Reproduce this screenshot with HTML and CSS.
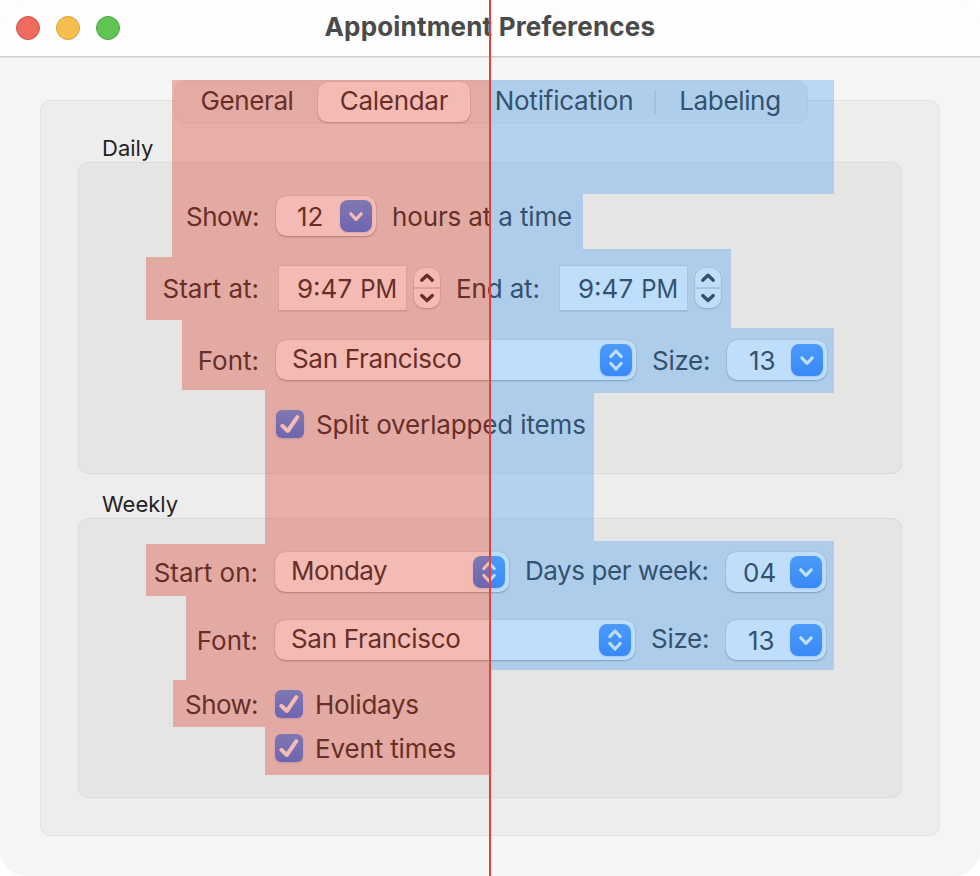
FILE: index.html
```html
<!DOCTYPE html>
<html lang="en">
<head>
<meta charset="utf-8">
<title>Appointment Preferences</title>
<link rel="stylesheet" href="styles.css">
</head>
<body>
<svg width="0" height="0" class="defs">
  <defs>
    <g id="down"><path d="M10.800 13.800 16 19.300l5.200-5.500"/></g>
    <g id="updown"><path d="M10.800 12.500 16 7l5.200 5.500M10.800 19.500 16 25l5.200-5.500"/></g>
    <g id="check"><path d="M6.300 15.800 11.800 21 21.300 7.200"/></g>
    <g id="step"><path d="M7.700 12.200 13 7.200l5.300 5M7.700 27.600l5.300 5 5.300-5"/></g>
  </defs>
</svg>
<main class="window">
  <header class="titlebar">
    <div class="lights"><i class="light red"></i><i class="light yellow"></i><i class="light green"></i></div>
    <h1 class="title">Appointment Preferences</h1>
  </header>
  <section class="pane">
    <nav class="tabs">
      <span class="tab general">General</span>
      <span class="tab calendar">Calendar</span>
      <span class="tab notification">Notification</span>
      <span class="tab labeling">Labeling</span>
    </nav>
    <h2 class="heading">Daily</h2>
    <div class="group daily">
      <div class="row">
        <span class="label show">Show:</span>
        <span class="combo"><span class="value">12</span><svg class="knob"><use href="#down"/></svg></span>
        <span class="text hours">hours at a time</span>
      </div>
      <div class="row times">
        <span class="label">Start at:</span>
        <span class="field"><span>9:47</span> <span class="pm">PM</span></span>
        <svg class="stepper"><use href="#step"/></svg>
        <span class="text endat">End at:</span>
        <span class="field"><span>9:47</span> <span class="pm">PM</span></span>
        <svg class="stepper"><use href="#step"/></svg>
      </div>
      <div class="row">
        <span class="label">Font:</span>
        <span class="select"><span class="choice">San Francisco</span><svg class="knob"><use href="#updown"/></svg></span>
        <span class="text size">Size:</span>
        <span class="combo"><span class="value thirteen">13</span><svg class="knob"><use href="#down"/></svg></span>
      </div>
      <div class="row split">
        <span class="label"></span>
        <svg class="checkbox"><use href="#check"/></svg>
        <span class="text">Split overlapped items</span>
      </div>
    </div>
    <h2 class="heading second">Weekly</h2>
    <div class="group weekly">
      <div class="row">
        <span class="label">Start on:</span>
        <span class="select monday"><span class="choice">Monday</span><svg class="knob"><use href="#updown"/></svg></span>
        <span class="text days raised">Days per week:</span>
        <span class="combo"><span class="value four">04</span><svg class="knob"><use href="#down"/></svg></span>
      </div>
      <div class="row">
        <span class="label">Font:</span>
        <span class="select"><span class="choice">San Francisco</span><svg class="knob"><use href="#updown"/></svg></span>
        <span class="text size raised">Size:</span>
        <span class="combo"><span class="value thirteen">13</span><svg class="knob"><use href="#down"/></svg></span>
      </div>
      <div class="row">
        <span class="label show">Show:</span>
        <svg class="checkbox"><use href="#check"/></svg>
        <span class="text holidays">Holidays</span>
      </div>
      <div class="row last">
        <span class="label"></span>
        <svg class="checkbox"><use href="#check"/></svg>
        <span class="text">Event times</span>
      </div>
    </div>
  </section>
  <div class="region left"></div>
  <div class="region right"></div>
  <div class="axis"></div>
</main>
</body>
</html>
```
FILE: styles.css
```css
* { box-sizing: border-box; }
body { margin: 0; background: #fff; font: 26px/32px Inter, "Liberation Sans", sans-serif; color: #242424; }
h1, h2 { margin: 0; }
.defs { position: absolute; }
.window { position: relative; width: 980px; height: 876px; overflow: hidden; border-radius: 20px 20px 26px 26px; background: #f5f5f5; }
.titlebar { display: flex; align-items: center; height: 58px; padding: 0 16px 2px; background: #fdfdfd; border-bottom: 1px solid #e6e6e6; box-shadow: inset 0 -1px #cdcdcd; }
.lights { display: flex; gap: 16px; width: 308.5px; }
.light { width: 24px; height: 24px; border-radius: 50%; border: 1px solid; }
.red { background: #ed6b5f; border-color: #d65349; }
.yellow { background: #f5bf4f; border-color: #d9a03c; }
.green { background: #61c555; border-color: #4aa73d; }
.title { font-size: 26px; line-height: 32px; font-weight: 700; letter-spacing: .18px; padding-bottom: 2px; color: #4a4a4a; white-space: nowrap; }

.pane { width: 900px; height: 736px; margin: 42px 40px 0; padding: 0 37px; border: 1px solid #e2e2e2; border-radius: 10px; background: #ededed; }
.tabs { display: flex; align-items: center; width: 634px; height: 44px; margin: -21px 0 0 96px; padding: 0; border: 1px solid #dfdfdf; border-radius: 11px; background: #e7e7e7; }
.tab { text-align: center; line-height: 38px; height: 40px; white-space: nowrap; }
.general { width: 143px; letter-spacing: -.4px; padding-left: 1px; }
.calendar { width: 152px; letter-spacing: -.3px; border-radius: 9px; background: #fff; box-shadow: 0 0 1px rgba(0,0,0,.3), 0 1px 2px rgba(0,0,0,.25); }
.notification { width: 186px; letter-spacing: -.22px; padding-left: 2px; }
.labeling { width: 150px; letter-spacing: -.35px; padding-right: 2px; position: relative; }
.labeling::before { content: ""; position: absolute; left: -2px; top: 8px; width: 2px; height: 24px; background: #d2d2d2; }
.heading { font-size: 22px; line-height: 28px; font-weight: 400; height: 28px; margin: 10px 0 0 24px; }
.heading.second { margin-top: 16px; }
.group { border: 1px solid #dbdbdb; border-radius: 10px; background: #e5e5e5; }
.daily { height: 312px; padding-top: 33px; }
.weekly { height: 280px; padding-top: 33px; }
.row { display: flex; align-items: center; height: 40px; margin-bottom: 32px; white-space: nowrap; }
.row.split { margin-top: -8px; }
.weekly .row { margin-bottom: 28px; }
.weekly .row:nth-child(3) { margin-bottom: 4px; margin-top: -4px; }
.label { width: 180px; margin-right: 17px; padding-top: 2px; text-align: right; }
.weekly .label { width: 179px; }
.show { letter-spacing: -.6px; }
.text { margin-left: 16px; padding-top: 2px; letter-spacing: -.14px; }
.text.raised { padding: 0 0 2px; }
.checkbox + .text { margin-left: 12px; }
.combo, .select { display: flex; justify-content: space-between; align-items: center; height: 40px; padding-right: 4px; border-radius: 10px; background: #fff; box-shadow: 0 0 1px rgba(0,0,0,.35), 0 1px 2px rgba(0,0,0,.3); }
.combo { width: 100px; padding-left: 21px; }
.value { padding-top: 2px; }
.thirteen { padding-left: 1px; }
.four { margin-left: -4px; }
.select { width: 360px; padding-left: 16px; }
.choice { padding-bottom: 2px; letter-spacing: -.32px; }
.monday { width: 234px; }
.monday .choice { letter-spacing: -.5px; }
.endat { width: 101px; }
.text.size { width: 75px; letter-spacing: -.3px; }
.text.days { width: 201px; letter-spacing: -.44px; }
.text.holidays { letter-spacing: -.28px; }
.knob { width: 32px; height: 32px; border-radius: 8px; background: linear-gradient(#4a96fb, #2f79f8); fill: none; stroke: #fff; stroke-width: 3.200; stroke-linecap: round; stroke-linejoin: round; box-shadow: 0 1px 2px rgba(50,110,240,.25); }
.field { display: flex; justify-content: space-between; align-items: center; width: 129px; height: 46px; padding: 2px 9px 0 18px; margin: 0 7px 0 2px; border: 1px solid #d6d6d6; border-bottom-color: #c4c4c4; background: #fff; box-shadow: 0 1px #cfcfcf; }
.pm { transform: scaleX(.92); transform-origin: right; }
.stepper { width: 26px; height: 40px; border-radius: 10px; background: linear-gradient(#fff 19px, #d9d9d9 19px, #d9d9d9 21px, #fff 21px); fill: none; stroke: #242424; stroke-width: 3.400; stroke-linecap: round; stroke-linejoin: round; box-shadow: 0 0 1px rgba(0,0,0,.3), 0 1px 2px rgba(0,0,0,.25); }
.checkbox { width: 28px; height: 28px; border-radius: 6px; background: linear-gradient(#4a96fb, #2f79f8); fill: none; stroke: #fff; stroke-width: 4; stroke-linecap: round; stroke-linejoin: round; box-shadow: 0 1px 2px rgba(50,110,240,.3); }

.region { position: absolute; inset: 0; opacity: .36; }
.left { background: #de422f; clip-path: polygon(172px 80px, 490px 80px, 490px 775px, 265px 775px, 265px 727px, 173px 727px, 173px 680px, 186px 680px, 186px 596px, 146px 596px, 146px 544px, 265px 544px, 265px 390px, 182px 390px, 182px 320px, 146px 320px, 146px 257px, 172px 257px); }
.right { background: #4da3f4; clip-path: polygon(490px 80px, 834px 80px, 834px 194px, 583px 194px, 583px 249px, 731px 249px, 731px 328px, 834px 328px, 834px 393px, 594px 393px, 594px 541px, 834px 541px, 834px 670px, 490px 670px); }
.axis { position: absolute; left: 489px; top: 0; width: 2px; height: 100%; background: #ea3d40; }
```
